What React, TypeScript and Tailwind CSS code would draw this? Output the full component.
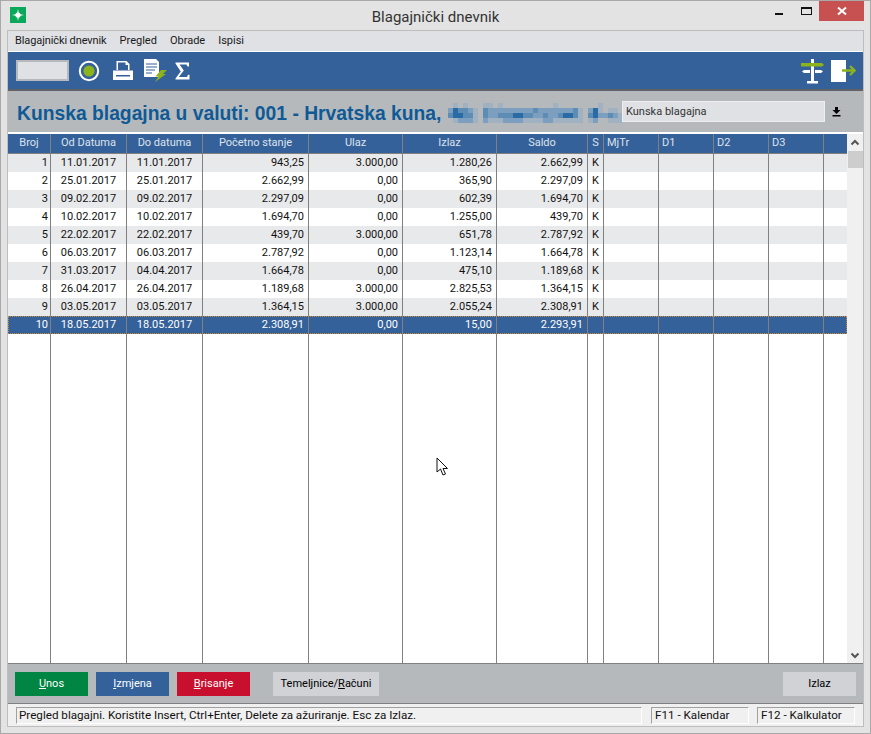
const cols = "grid grid-cols-[43px_76px_76px_106px_94px_94px_91px_16px_55px_55px_55px_55px_23px]";

const rows = [
  ["1", "11.01.2017", "11.01.2017", "943,25", "3.000,00", "1.280,26", "2.662,99", "K"],
  ["2", "25.01.2017", "25.01.2017", "2.662,99", "0,00", "365,90", "2.297,09", "K"],
  ["3", "09.02.2017", "09.02.2017", "2.297,09", "0,00", "602,39", "1.694,70", "K"],
  ["4", "10.02.2017", "10.02.2017", "1.694,70", "0,00", "1.255,00", "439,70", "K"],
  ["5", "22.02.2017", "22.02.2017", "439,70", "3.000,00", "651,78", "2.787,92", "K"],
  ["6", "06.03.2017", "06.03.2017", "2.787,92", "0,00", "1.123,14", "1.664,78", "K"],
  ["7", "31.03.2017", "04.04.2017", "1.664,78", "0,00", "475,10", "1.189,68", "K"],
  ["8", "26.04.2017", "26.04.2017", "1.189,68", "3.000,00", "2.825,53", "1.364,15", "K"],
  ["9", "03.05.2017", "03.05.2017", "1.364,15", "3.000,00", "2.055,24", "2.308,91", "K"],
  ["10", "18.05.2017", "18.05.2017", "2.308,91", "0,00", "15,00", "2.293,91", ""],
];

const headers = ["Broj", "Od Datuma", "Do datuma", "Početno stanje", "Ulaz", "Izlaz", "Saldo", "S"];

// the smudged-out company name, 5px blocks
const mosaic = [
  "01010001101000000000010000000010000",
  "24332103222222222322222223102410110",
  "34433103223334433223223443103422321",
  "01222102111222211112211111101200111",
];
const shades = ["", "#a0b1c2", "#7d9fbf", "#5d8cb5", "#2a6aa5"];

function Row({ row, index }: { row: string[]; index: number }) {
  const selected = index === 9;
  const bg = selected
    ? "bg-[#35619a] text-white outline-1 outline-dotted outline-[#c98a3a] -outline-offset-1"
    : index % 2 === 0
      ? "bg-[#e8e9eb] text-[#111]"
      : "bg-white text-[#111]";
  return (
    <div className={`${cols} h-[18px] leading-[18px] ${bg}`}>
      <div className="border-r border-[#808080] text-right pr-[2px]">{row[0]}</div>
      <div className="border-r border-[#808080] text-center">{row[1]}</div>
      <div className="border-r border-[#808080] text-center">{row[2]}</div>
      <div className="border-r border-[#808080] text-right pr-[4px]">{row[3]}</div>
      <div className="border-r border-[#808080] text-right pr-[4px]">{row[4]}</div>
      <div className="border-r border-[#808080] text-right pr-[4px]">{row[5]}</div>
      <div className="border-r border-[#808080] text-right pr-[4px]">{row[6]}</div>
      <div className="border-r border-[#808080] text-center">{row[7]}</div>
      <div className="border-r border-[#808080]" />
      <div className="border-r border-[#808080]" />
      <div className="border-r border-[#808080]" />
      <div className="border-r border-[#808080]" />
      <div />
    </div>
  );
}

function AppButton({ label, hot, rest, className }: { label?: string; hot: string; rest: string; className: string }) {
  return (
    <div className={`h-6 pt-[1px] flex items-center justify-center ${className}`}>
      {label}
      <span className="underline">{hot}</span>
      {rest}
    </div>
  );
}

export default function App() {
  return (
    <div className="w-[871px] h-[734px] bg-[#e3e3e3] border border-[#a9a9a9] flex flex-col text-[11px] text-[#1a1a1a] overflow-hidden relative font-['Roboto',sans-serif]">
      {/* title bar */}
      <div className="h-[29px] flex items-start relative shrink-0">
        <div className="ml-[9px] mt-[6px] w-4 h-4 bg-[#0aa85a] flex items-center justify-center">
          <svg width="14" height="14" viewBox="0 0 14 14">
            <path d="M7 1 L8 6 L13 7 L8 8 L7 13 L6 8 L1 7 L6 6 Z" fill="#fff" />
            <circle cx="7" cy="7" r="2.6" fill="#fff" />
          </svg>
        </div>
        <div className="absolute inset-x-0 top-[6px] text-center text-[15px] leading-[20px] text-[#333]">Blagajnički dnevnik</div>
        <div className="flex-1" />
        <div className="flex items-start mr-[6px]">
          <div className="w-[8px] h-[2px] bg-[#111] mt-[12px] mr-[18px]" />
          <div className="w-[11px] h-[8px] border border-t-2 border-[#111] mt-[6px] mr-[7px]" />
          <div className="w-[45px] h-[20px] bg-[#c75050] flex items-center justify-center">
            <svg width="10" height="10" viewBox="0 0 10 10">
              <path d="M1 1.5 L9 8.5 M9 1.5 L1 8.5" stroke="#fff" strokeWidth="2" />
            </svg>
          </div>
        </div>
      </div>

      {/* inner window */}
      <div className="ml-[6px] w-[857px] h-[697px] border border-[#bdbdbd] flex flex-col bg-white">
        <div className="h-[20px] bg-[#dfe1e5] flex items-center pl-[7px] gap-[13px] shrink-0">
          <span className="tracking-[-0.1px]">Blagajnički dnevnik</span>
          <span>Pregled</span>
          <span>Obrade</span>
          <span>Ispisi</span>
        </div>

        {/* toolbar */}
        <div className="h-[40px] bg-[#35619a] border-b-2 border-t border-t-white border-b-[#5f6368] flex items-center pl-[8px] pr-[7px] shrink-0">
          <div className="w-[53px] h-[21px] bg-[#dfe1e5] border-2 border-[#b5b8bc]" />
          <svg className="ml-[9px]" width="22" height="22" viewBox="0 0 22 22">
            <circle cx="11" cy="11" r="9.2" fill="none" stroke="#fff" strokeWidth="2" />
            <circle cx="11" cy="11" r="5.6" fill="#8cb31c" />
          </svg>
          <svg className="ml-[12px]" width="22" height="22" viewBox="0 0 22 22" fill="#fff">
            <path d="M4.5 1 H14.5 L17.5 4 V10 H16 V5 H13.5 V2.5 H6 V10 H4.5 Z" />
            <path d="M1 10.5 H21 V20 H1 Z" />
            <rect x="4" y="15" width="14" height="1.5" fill="#35619a" />
          </svg>
          <svg className="ml-[9px]" width="24" height="24" viewBox="0 0 24 24">
            <path d="M1 0 H13 L16 3 V18 H1 Z" fill="#fff" />
            <path d="M3 5 H14 M3 8 H14 M3 11 H12 M3 14 H9" stroke="#35619a" strokeWidth="1" />
            <path d="M18 11 H24 L20 15 H23 L12 23 L15.5 17.5 H12.5 Z" fill="#8cb31c" />
          </svg>
          <svg className="ml-[8px]" width="15" height="18" viewBox="0 0 15 18">
            <path d="M0.5 0.5 H14 V4.5 H12.5 L11.5 2.5 H4.5 L8.8 8.5 L3.8 15 H12 L13 12.8 H14.5 V17.5 H0.5 V16.4 L5.7 9.4 L0.5 1.6 Z" fill="#fff" />
          </svg>
          <div className="flex-1" />
          <svg width="24" height="26" viewBox="0 0 24 26" className="mr-[6px]">
            <rect x="10" y="1" width="3" height="24" fill="#fff" />
            <path d="M0 5 H21 L23 7 L21 8.5 H0 Z" fill="#8cb31c" />
            <path d="M3 12 H9 V15 H3 L1 13.5 Z M14 12 H20 L22 13.5 L20 15 H14 Z" fill="#fff" />
            <rect x="6" y="23" width="11" height="2.5" fill="#fff" />
          </svg>
          <svg width="25" height="24" viewBox="0 0 25 24">
            <rect x="0" y="1" width="15" height="22" fill="#fff" />
            <path d="M11 11.5 H22 M19 7 L23.5 11.5 L19 16" stroke="#8cb31c" strokeWidth="2.4" fill="none" />
          </svg>
        </div>

        {/* heading */}
        <div className="h-[43px] bg-[#b5b9bc] flex items-center relative shrink-0 border-b-2 border-b-white pt-[6px]">
          <div className="ml-[9px] text-[19.3px] font-bold text-[#0f5a96] whitespace-nowrap font-['Liberation_Sans',sans-serif]">
            Kunska blagajna u valuti: 001 - Hrvatska kuna,
          </div>
          <svg className="absolute left-[440px] top-[12px]" width="175" height="20" viewBox="0 0 175 20" shapeRendering="crispEdges">
            {mosaic.map((line, y) =>
              line.split("").map((c, x) =>
                c === "0" ? null : <rect key={`${x}-${y}`} x={x * 5} y={y * 5} width="5" height="5" fill={shades[Number(c)]} />,
              ),
            )}
          </svg>
          <div className="absolute left-[614px] top-[10px] w-[203px] h-[21px] bg-[#dfe1e5] border border-[#eceef0] pl-[3px] leading-[19px] text-[#333]">
            Kunska blagajna
          </div>
          <svg className="absolute left-[824px] top-[16px]" width="9" height="10" viewBox="0 0 9 10">
            <path d="M3 0 H6 V3 H8.5 L4.5 7 L0.5 3 H3 Z M0.5 8 H8.5 V9.5 H0.5 Z" fill="#000" />
          </svg>
        </div>

        {/* grid */}
        <div className="flex-1 min-h-0 flex bg-white border-b border-[#808080]">
          <div className="w-[839px] flex flex-col">
            <div className={`${cols} h-[20px] leading-[17px] bg-[#35619a] text-[#dde3ec] border-b border-[#808080] shrink-0`}>
              {headers.map((h) => (
                <div key={h} className="border-r border-[#808080] text-center">
                  {h}
                </div>
              ))}
              <div className="border-r border-[#808080] pl-[3px]">MjTr</div>
              <div className="border-r border-[#808080] pl-[3px]">D1</div>
              <div className="border-r border-[#808080] pl-[3px]">D2</div>
              <div className="border-r border-[#808080] pl-[3px]">D3</div>
              <div />
            </div>
            {rows.map((r, i) => (
              <Row key={r[0]} row={r} index={i} />
            ))}
            <div className={`${cols} flex-1`}>
              {Array.from({ length: 12 }).map((_, i) => (
                <div key={i} className="border-r border-[#808080]" />
              ))}
            </div>
          </div>
          <div className="w-[16px] bg-[#f0f0f0] flex flex-col items-center justify-between">
            <div className="w-full flex flex-col items-center">
              <svg width="16" height="16" viewBox="0 0 16 16" className="mt-[1px]">
                <path d="M4.5 9.5 L8 6 L11.5 9.5" stroke="#555" strokeWidth="2" fill="none" />
              </svg>
              <div className="w-[15px] h-[17px] bg-[#cdcdcd]" />
            </div>
            <svg width="16" height="16" viewBox="0 0 16 16">
              <path d="M4.5 6.5 L8 10 L11.5 6.5" stroke="#555" strokeWidth="2" fill="none" />
            </svg>
          </div>
        </div>

        {/* buttons */}
        <div className="h-[40px] bg-[#b5b9bc] flex items-center pl-[7px] pr-[7px] border-b border-[#808080] shrink-0">
          <AppButton hot="U" rest="nos" className="w-[73px] bg-[#008542] text-white" />
          <AppButton hot="I" rest="zmjena" className="w-[73px] ml-[8px] bg-[#35619a] text-white" />
          <AppButton hot="B" rest="risanje" className="w-[73px] ml-[8px] bg-[#c8102e] text-white" />
          <AppButton label="Temeljnice/" hot="R" rest="ačuni" className="w-[106px] ml-[23px] bg-[#d0d2d6] text-black" />
          <div className="flex-1" />
          <AppButton hot="" rest="Izlaz" className="w-[73px] bg-[#d0d2d6] text-black" />
        </div>

        {/* status */}
        <div className="h-[22px] shrink-0 bg-[#f0f0f0] flex items-center pl-[8px] text-[#111]">
          <div className="w-[626px] h-[17px] border-t border-l border-[#a0a0a0] border-b border-r border-b-white border-r-white pl-[2px] leading-[15px] text-[11.65px]">
            Pregled blagajni. Koristite Insert, Ctrl+Enter, Delete za ažuriranje. Esc za Izlaz.
          </div>
          <div className="w-[98px] ml-[9px] h-[17px] border-t border-l border-[#a0a0a0] border-b border-r border-b-white border-r-white pl-[3px] leading-[15px] text-[11.65px]">
            F11 - Kalendar
          </div>
          <div className="w-[98px] ml-[8px] h-[17px] border-t border-l border-[#a0a0a0] border-b border-r border-b-white border-r-white pl-[3px] leading-[15px] text-[11.65px]">
            F12 - Kalkulator
          </div>
        </div>
      </div>

      {/* mouse cursor */}
      <svg className="absolute left-[435px] top-[456px]" width="13" height="20" viewBox="0 0 13 20">
        <path d="M1 1 V15 L4.5 12 L7 18 L9.5 17 L7 11.5 H11.5 Z" fill="#fff" stroke="#111" strokeWidth="1" />
      </svg>
    </div>
  );
}
